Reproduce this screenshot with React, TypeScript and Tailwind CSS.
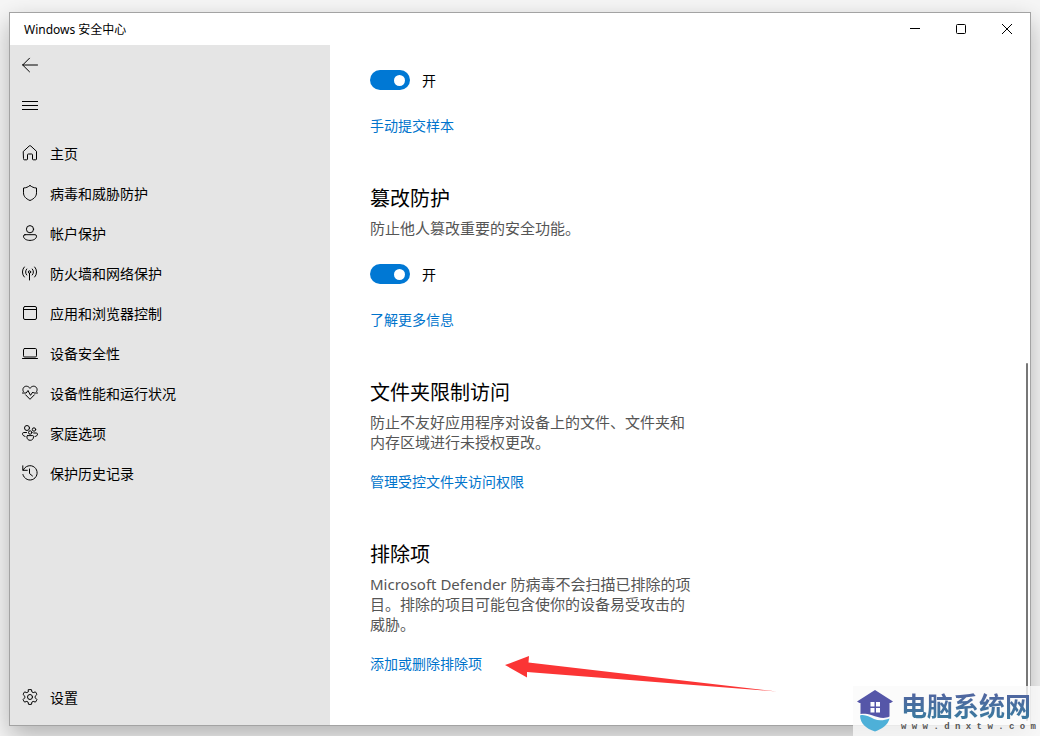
import { useState } from "react";
import type { ReactNode } from "react";

function Icon({ children }: { children: ReactNode }) {
  return (
    <svg
      viewBox="0 0 16 16"
      className="size-4 shrink-0"
      fill="none"
      stroke="currentColor"
      strokeWidth="1"
      strokeLinecap="round"
      strokeLinejoin="round"
      aria-hidden="true"
    >
      {children}
    </svg>
  );
}

const navItems: { label: string; icon: ReactNode }[] = [
  {
    label: "主页",
    icon: <path d="M1.500 6.300 7.200 1a1.200 1.200 0 0 1 1.600 0l5.700 5.300V14a.8.8 0 0 1-.8.8h-2.400a.8.8 0 0 1-.8-.8V9.800a.8.8 0 0 0-.8-.8H6.300a.8.8 0 0 0-.8.8V14a.8.8 0 0 1-.8.8H2.300a.8.8 0 0 1-.8-.8Z" />,
  },
  {
    label: "病毒和威胁防护",
    icon: <path d="M8 .5C9.800 2 12 2.900 14.500 3v4.800c0 3.500-2.300 6-6.500 7.700-4.200-1.700-6.500-4.200-6.500-7.700V3C4 2.900 6.200 2 8 .5Z" />,
  },
  {
    label: "帐户保护",
    icon: (
      <>
        <circle cx="8" cy="4.200" r="3.600" />
        <path d="M3 9.700h10a1.500 1.500 0 0 1 1.500 1.500c0 2.500-2.800 4.200-6.500 4.200s-6.500-1.700-6.500-4.200A1.500 1.500 0 0 1 3 9.700Z" />
      </>
    ),
  },
  {
    label: "防火墙和网络保护",
    icon: (
      <>
        <circle cx="7.500" cy="7" r="1.200" />
        <path d="M7.500 8.300v6.700M4.700 10a4.300 4.300 0 0 1 0-6M10.300 10a4.300 4.300 0 0 0 0-6M2.300 12a7.300 7.300 0 0 1 0-10M12.700 12a7.300 7.300 0 0 0 0-10" />
      </>
    ),
  },
  {
    label: "应用和浏览器控制",
    icon: (
      <>
        <rect x="1.500" y="1.500" width="13" height="13" rx="1.500" />
        <path d="M1.500 4.500h13" />
      </>
    ),
  },
  {
    label: "设备安全性",
    icon: (
      <>
        <rect x="1.500" y="3.500" width="13" height="8.500" rx="1.200" />
        <path d="M.5 13.500h15" />
      </>
    ),
  },
  {
    label: "设备性能和运行状况",
    icon: (
      <>
        <path d="M1.300 6.500C-.2 3.400 2.200 1.200 4.300 1.200c1.600 0 2.900.9 3.700 2.200.8-1.300 2.100-2.200 3.700-2.200 2.100 0 4.500 2.200 3 5.300M3.600 9.800 8 14.300l4.400-4.500" />
        <path d="M.5 8h3.700L6 5.500l2.500 4.800L10.800 7l1 1h3.700" />
      </>
    ),
  },
  {
    label: "家庭选项",
    icon: (
      <>
        <circle cx="5" cy="3" r="2.500" />
        <circle cx="12" cy="4.500" r="1.700" />
        <circle cx="8.200" cy="7.500" r="1.700" />
        <path d="M4.500 7.500H1.800c-.8 0-1.300.5-1.300 1.200 0 1.300.9 2.300 2.500 2.700M11.700 8h2.600c.7 0 1.200.5 1.200 1.100 0 1.300-1 2.200-2.500 2.400M5.700 10.600h5a.8.8 0 0 1 .8.800v.5c0 2-1.300 3.400-3.300 3.400s-3.300-1.400-3.300-3.400v-.5c0-.5.400-.8.8-.8Z" />
      </>
    ),
  },
  {
    label: "保护历史记录",
    icon: (
      <>
        <path d="M.8.8v4.500h4.500M1.200 5.200a7.200 7.200 0 1 1-.3 4.300" />
        <path d="M7.500 4v4.500l3 2.500" />
      </>
    ),
  },
];

function NavRow({ label, icon }: { label: string; icon: ReactNode }) {
  return (
    <a href="#" className="flex h-10 items-center gap-3 px-3 text-sm">
      <Icon>{icon}</Icon>
      <span className="pt-[2px]">{label}</span>
    </a>
  );
}

function Toggle({ name }: { name: string }) {
  const [on, setOn] = useState(true);
  return (
    <label className="flex h-5 items-center gap-3 text-sm">
      <input
        type="checkbox"
        aria-label={name}
        checked={on}
        onChange={() => setOn(!on)}
        className="flex h-5 w-10 appearance-none items-center rounded-full bg-[#767676] px-[5px] before:size-[11px] before:rounded-full before:bg-white before:content-[''] checked:justify-end checked:bg-[#0078d4]"
      />
      <span className="pt-[2px]">{on ? "开" : "关"}</span>
    </label>
  );
}

function TextLink({ children }: { children: ReactNode }) {
  return (
    <a href="#" className="text-sm leading-5 text-[#0074cc]">
      {children}
    </a>
  );
}

function Section({ title, text, children }: { title: string; text: string; children: ReactNode }) {
  return (
    <section className="flex flex-col items-start">
      <h2 className="text-xl leading-7">{title}</h2>
      <p className="mt-[5px] max-w-[324px] text-[15px] leading-5 text-[#555]">{text}</p>
      {children}
    </section>
  );
}

function Arrow() {
  return (
    <svg viewBox="0 0 272 36" className="absolute top-[2px] left-full ml-[23px] h-9 w-[272px]" aria-hidden="true">
      <path d="M0 9 24 0 23.500 6.500 272 35.500 22 16 22 21.500Z" fill="#fb3535" />
    </svg>
  );
}

function Watermark() {
  return (
    <div className="absolute right-0 bottom-0 flex h-[50px] w-[187px] items-center gap-2 bg-[#fafafa]/80 pl-1">
      <svg viewBox="0 0 36 42" className="h-[42px] w-9 shrink-0" aria-hidden="true">
        <path d="M18 0 36 11.500 33.500 13H32.500V26.500C26 29.500 21 27 15 25.200 10 23.800 7 23.500 3.500 24V13H2.500L0 11.500Z" fill="#5556a8" />
        <path d="M3 25.500C8 24 12 27 17 29c5 2 10 1.500 15.500-.5C31 35 25 39 18 41.500 9 38.500 3.500 34 3 25.500Z" fill="#4eb0d8" />
        <path d="M13.500 12h4v4.500h-4zM19 12h4v4.500h-4zM13.500 18h4v4.500h-4zM19 18h4v4.500h-4z" fill="#fff" />
      </svg>
      <div className="flex flex-col whitespace-nowrap">
        <span className="bg-linear-to-b from-[#5363a0] to-[#347b9e] bg-clip-text text-[26px] leading-8 font-bold text-transparent">
          电脑系统网
        </span>
        <span className="font-['Liberation_Mono',monospace] text-[9px] leading-[10px] font-bold text-[#555]">
          w w w . d n x t w . c o m
        </span>
      </div>
    </div>
  );
}

export default function App() {
  return (
    <div className="relative flex min-h-screen flex-col overflow-hidden bg-[#f6f6f6] px-[9px] pt-3 pb-[10px] font-['Noto_Sans','Noto_Sans_CJK_SC',sans-serif] text-black">
      <div className="flex grow flex-col border border-[#a3a3a3] bg-white shadow-[0_10px_24px_rgba(0,0,0,0.28)]">
        <header className="flex h-8 items-center justify-between pl-[14px]">
          <h1 className="pt-[2px] text-xs">Windows 安全中心</h1>
          <div className="flex">
            <button type="button" aria-label="最小化" className="flex h-8 w-[46px] items-center justify-center">
              <svg viewBox="0 0 10 10" className="size-[10px]" stroke="currentColor" fill="none">
                <path d="M0 4.500h10" />
              </svg>
            </button>
            <button type="button" aria-label="最大化" className="flex h-8 w-[46px] items-center justify-center">
              <svg viewBox="0 0 10 10" className="size-[10px]" stroke="currentColor" fill="none">
                <rect x=".5" y=".5" width="9" height="9" rx="1" />
              </svg>
            </button>
            <button type="button" aria-label="关闭" className="flex h-8 w-[46px] items-center justify-center">
              <svg viewBox="0 0 10 10" className="size-[10px]" stroke="currentColor" fill="none">
                <path d="m0 0 10 10M10 0 0 10" />
              </svg>
            </button>
          </div>
        </header>

        <div className="flex grow">
          <aside className="flex w-80 shrink-0 flex-col bg-[#e5e5e5] pb-2">
            <button type="button" aria-label="返回" className="flex h-10 items-center px-3">
              <Icon>
                <path d="M.5 8h15M7.500 1.200.7 8l6.800 6.800" />
              </Icon>
            </button>
            <button type="button" aria-label="导航" className="flex h-10 items-center px-3">
              <Icon>
                <path d="M0 4.500h16M0 8.500h16M0 12.500h16" />
              </Icon>
            </button>
            <nav className="flex grow flex-col pt-2">
              {navItems.map((item) => (
                <NavRow key={item.label} label={item.label} icon={item.icon} />
              ))}
              <div className="mt-auto">
                <NavRow
                  label="设置"
                  icon={
                    <>
                      <circle cx="8" cy="8" r="2.500" />
                      <path d="M6.500.7a7.500 7.500 0 0 1 3 0l.4 2.200 1.300.7 2.200-.7a7.500 7.500 0 0 1 1.500 2.600L13.200 7.200v1.600l1.700 1.700a7.500 7.500 0 0 1-1.500 2.600l-2.200-.7-1.300.7-.4 2.200a7.500 7.500 0 0 1-3 0l-.4-2.200-1.300-.7-2.200.7a7.500 7.500 0 0 1-1.500-2.600l1.700-1.700V7.200L1.100 5.500a7.500 7.500 0 0 1 1.500-2.600l2.200.7 1.300-.7Z" />
                    </>
                  }
                />
              </div>
            </nav>
          </aside>

          <main className="flex grow flex-col gap-[49px] pt-[25px] pl-10">
            <section className="flex flex-col items-start gap-[26px]">
              <Toggle name="自动提交样本" />
              <TextLink>手动提交样本</TextLink>
            </section>

            <Section title="篡改防护" text="防止他人篡改重要的安全功能。">
              <div className="mt-[26px] flex flex-col items-start gap-[26px]">
                <Toggle name="篡改防护" />
                <TextLink>了解更多信息</TextLink>
              </div>
            </Section>

            <Section title="文件夹限制访问" text="防止不友好应用程序对设备上的文件、文件夹和内存区域进行未授权更改。">
              <div className="mt-5 flex">
                <TextLink>管理受控文件夹访问权限</TextLink>
              </div>
            </Section>

            <Section title="排除项" text="Microsoft Defender 防病毒不会扫描已排除的项目。排除的项目可能包含使你的设备易受攻击的威胁。">
              <div className="relative mt-5 flex">
                <TextLink>添加或删除排除项</TextLink>
                <Arrow />
              </div>
            </Section>
          </main>

          <div className="flex flex-col pr-[2px] pb-1" aria-hidden="true">
            <div className="grow-8" />
            <div className="w-[2px] grow-9 rounded-full bg-[#777]" />
          </div>
        </div>
      </div>
      <Watermark />
    </div>
  );
}
